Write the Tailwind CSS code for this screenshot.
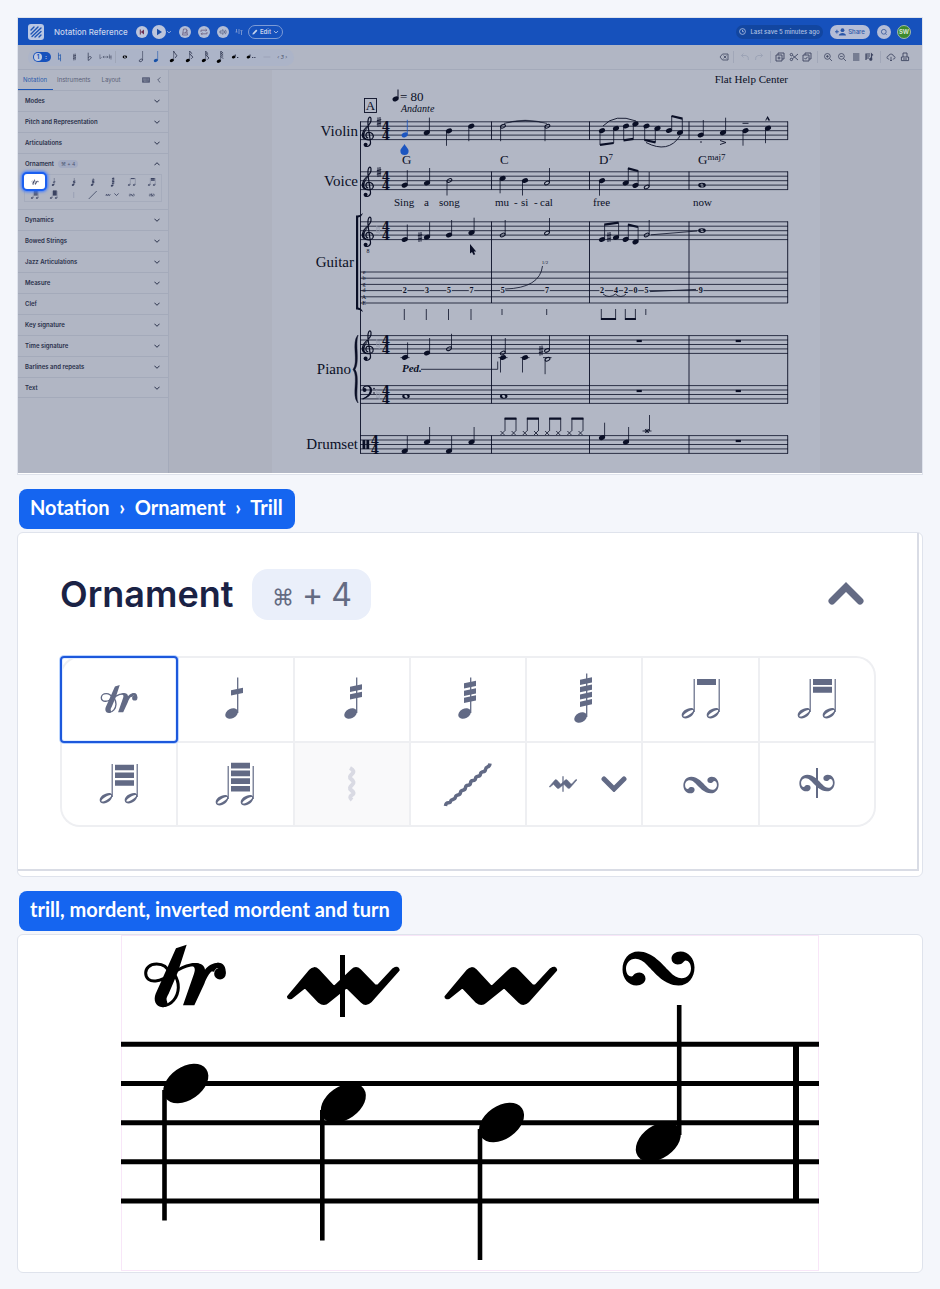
<!DOCTYPE html>
<html lang="en">
<head>
    <meta charset="UTF-8">
    <meta name="viewport" content="width=device-width, initial-scale=1.0">
    <title>Notation Reference - Trill</title>
    <script src="https://cdn.jsdelivr.net/npm/@tailwindcss/browser@4"></script>
</head>
<body class="bg-[#f4f6fb] px-[17px] pt-[17px] pb-4 font-['Inter',sans-serif]">

    <!-- Shared music symbols -->
    <svg class="absolute w-0 h-0" aria-hidden="true">
        <defs>
            <ellipse id="head" rx="3.2" ry="2.3" transform="rotate(-25)"/>
            <ellipse id="half" rx="2.6" ry="1.6" transform="rotate(-28)" fill="none" stroke="currentColor" stroke-width="1"/>
            <g id="up"><use href="#head"/><path d="M2.6 -.5V-15" stroke="currentColor" stroke-width=".8"/></g>
            <g id="down"><use href="#head"/><path d="M-2.5 .5V15" stroke="currentColor" stroke-width=".8"/></g>
            <g id="halfUp"><use href="#half"/><path d="M2.5 -.5V-15" stroke="currentColor" stroke-width=".8"/></g>
            <g id="halfDown"><use href="#half"/><path d="M-2.4 .5V15" stroke="currentColor" stroke-width=".8"/></g>
            <g id="whole"><path fill-rule="evenodd" d="M-3.8 0A3.8 2.4 0 1 0 3.8 0A3.8 2.4 0 1 0 -3.8 0ZM-1.7 -.6C-1 -2 1 -1.6 1.6 .4C1.8 1.8 -.4 2 -1.2 .8Z"/></g>
            <path id="staff" d="M360 0H788M360 4.4H788M360 8.9H788M360 13.3H788M360 17.8H788" stroke="currentColor" stroke-width=".8" fill="none"/>
            <g id="treble">
                <path d="M.3 3C-3 2.5 -2.8 -2.6 .5 -2.8C4 -3 6 0 5 2.5C4 5 -1 5.5 -4 3.5C-7 1 -5.5 -4.5 -2 -7.5C1 -10 3.5 -13 3 -16.5C2.6 -18.5 1 -18.5 .3 -16C-.7 -13 0 -9 1 -3L2.5 7C3 11.5 -2 12.5 -3.5 10" fill="none" stroke="currentColor" stroke-width="1.2"/>
                <path d="M-5.4 0C-5 -4 0 -7.5 2 -11L3.4 -15C3.4 -10 -3 -6 -3.6 0C-3.8 3 -1 4.4 1 4.6C-3 5 -5.6 3 -5.4 0Z"/>
                <circle cx="-2.4" cy="9.6" r="2"/>
            </g>
            <g id="bass">
                <path d="M-5.5 12.5C-1 10.5 2.8 7.5 2.8 3.4C2.8 .4 1 -.6 -1 -.6C-3.4 -.6 -5 1 -5 3" fill="none" stroke="currentColor" stroke-width="1.1"/>
                <path d="M-1 -1C2 -1 4 .6 4 3.6C4 8 .4 11 -5.5 12.8C-1 10 1.8 7.5 1.8 3.4C1.8 1 .6 -.4 -1 -1Z"/>
                <circle cx="-3.4" cy="3.4" r="1.9"/><circle cx="6" cy="2" r=".8"/><circle cx="6" cy="6.4" r=".8"/>
            </g>
            <path id="sharp" d="M-1 -4.6V5M1 -5V4.6M-2.2 -1.2L2.2 -2.4M-2.2 2.2L2.2 1" stroke="currentColor" stroke-width=".9" fill="none"/>
            <path id="natural" d="M-1.2 -5V3M1.2 -3V5M-1.2 -1.8L1.2 -2.4M-1.2 2.6L1.2 2" stroke="currentColor" stroke-width=".8" fill="none"/>
            <rect id="rest" x="-2.6" y="-1.1" width="5.2" height="2.2"/>
            <path id="cross" d="M-2 -2L2 2M-2 2L2 -2" stroke="currentColor" stroke-width=".8"/>
            <g id="time" font-family="DejaVu Serif, serif" font-weight="700" font-size="12" text-anchor="middle">
                <text y="9">4</text><text y="18">4</text>
            </g>
            <path id="turn" d="M-20 -17C-6 -17 4 -4 11 3C15 7.5 19 9.8 23 9.8C29 9.8 32.5 5 32.5 0C32.5 -5 30 -8 27 -8C25 -8 25 -4 19 -4A6 6 0 0 1 13 -10C13 -14 17 -17 22 -17C30 -17 36 -10 36 -1C36 9 30 17 20 17C6 17 -4 4 -11 -3C-15 -7.5 -19 -9.8 -23 -9.8C-29 -9.8 -32.5 -5 -32.5 0C-32.5 5 -30 8 -27 8C-25 8 -25 4 -19 4A6 6 0 0 1 -13 10C-13 14 -17 17 -22 17C-30 17 -36 10 -36 1C-36 -9 -30 -17 -20 -17Z"/>
            <path id="mordent" d="M-55 10.7L-33 -15.5Q-29 -20 -24.7 -16L-9 1L9 -16Q13 -20 17 -16L32 -.5L35 -.5L50.3 -17Q55 -20 55.7 -16L27.7 15.5Q23 20 18.7 16L3.7 1.3L-14.7 16Q-19 20 -24 16L-38 1.3L-51.5 12Q-55 13 -55 10.7Z" stroke="currentColor" stroke-width="2" stroke-linejoin="round"/>
            <g id="trill"><g transform="translate(-225 -137)">
                <path d="M230 43L198 54L137 190C130 208 135 228 158 231C178 230 172 217 170 210C168 203 172 198 176 190L204 124Z"/>
                <path d="M158 226C185 226 204 200 205 172C206 150 198 140 190 126M178 128C172 108 155 101 140 101C118 101 107 115 107 128C107 145 120 154 137 152C165 150 185 130 205 118C225 106 245 101 266 104" fill="none" stroke="currentColor" stroke-width="9"/>
                <path d="M219 225H253L283 160C290 140 300 122 320 112L326 97C308 97 294 106 285 118C284 104 270 96 248 98L232 105C254 104 258 114 252 130Z"/>
                <path d="M300 122C308 102 316 97 326 97C340 97 349 110 347 130L330 118C324 110 318 112 312 124Z"/>
                <circle cx="330" cy="130" r="17.5"/>
            </g></g>
            <ellipse id="bigHead" rx="25" ry="16.5" transform="rotate(-35)"/>
            <ellipse id="cellHead" rx="6.7" ry="4.7" transform="rotate(-28)"/>
            <path id="cellHalf" fill-rule="evenodd" d="M-6.3 2.4C-6.6 -1.5 -1 -5.5 4 -5C7.5 -4 6.6 .5 3.6 3C-.5 6.5 -6 6 -6.3 2.4ZM-4.6 3.2C-3.6 4.8 5.6 -.2 5.2 -2.6C4.2 -4.6 -5.2 1 -4.6 3.2Z"/>
            <g id="pair"><use href="#cellHalf" x="-13" y="14"/><use href="#cellHalf" x="12" y="14"/><path d="M-6.8 13V-20M18.2 13V-20" stroke="currentColor" stroke-width="1.2"/></g>
            <path id="slash" d="M-6 -1.2L6 -3.8V1.4L-6 4Z"/>
            <path id="chev" d="M-2.6 -1.3L0 1.3L2.6 -1.3" fill="none" stroke="currentColor" stroke-width="1"/>
        </defs>
    </svg>

    <!-- Editor -->
    <section class="bg-white border border-[#dfe3ec] pb-px">
        <div class="bg-[#b1b6c4] text-[#29304a] overflow-hidden">
            <header class="h-[27px] bg-[#1651bc] flex items-center pl-[10px] pr-[11px] text-[#c8d4ec]">
                <svg class="size-4 shrink-0" viewBox="0 0 16 16"><rect width="16" height="16" rx="3" fill="#b9c7e4"/><path d="M3 6L6 3M3 10L10 3M4 12.5L13 4M7 13L13 7.5M11 13L13 11" stroke="#1e55b5" stroke-width="1.4" stroke-linecap="round"/></svg>
                <h1 class="ml-[10px] w-[82px] text-[8px] leading-none font-medium whitespace-nowrap">Notation Reference</h1>
                <button class="size-3 rounded-full bg-[#bcc5dc] flex items-center justify-center" aria-label="Rewind"><svg class="size-2" viewBox="0 0 8 8"><path d="M6 1.5V6.5L2.8 4ZM1.8 1.5H2.8V6.5H1.8Z" fill="#6b2f55"/></svg></button>
                <button class="ml-1 size-[14px] rounded-full bg-[#bcc5dc] flex items-center justify-center" aria-label="Play"><svg class="size-2" viewBox="0 0 8 8"><path d="M2 .8V7.2L7 4Z" fill="#1b4ea8"/></svg></button>
                <svg class="w-[6px] h-[6px]" viewBox="-3 -3 6 6"><use href="#chev" transform="scale(.7)"/></svg>
                <button class="ml-[7px] size-3 rounded-full bg-[#b3bdd6] flex items-center justify-center" aria-label="Metronome"><svg class="size-2" viewBox="0 0 8 8" fill="none" stroke="#6c5f80" stroke-width=".8"><path d="M2.5 1H5.5L6.5 7H1.5ZM2 5H6M4 5L6.5 2"/></svg></button>
                <button class="ml-[7px] size-3 rounded-full bg-[#b3bdd6] flex items-center justify-center" aria-label="Loop"><svg class="size-2" viewBox="0 0 8 8" fill="none" stroke="#6c5f80" stroke-width=".8"><path d="M1 4V2.2H6.8M5.6 1L6.8 2.2L5.6 3.4M7 4V5.8H1.2M2.4 4.6L1.2 5.8L2.4 7"/></svg></button>
                <button class="ml-[7px] size-3 rounded-full bg-[#b3bdd6] flex items-center justify-center" aria-label="Sound"><svg class="size-2" viewBox="0 0 8 8" fill="none" stroke="#5c6485" stroke-width=".8"><path d="M1 3H2.4L4 1.6V6.4L2.4 5H1ZM5.2 2.6Q6.2 4 5.2 5.4M6.4 1.8Q8 4 6.4 6.2"/></svg></button>
                <svg class="ml-[6px] size-2 shrink-0" viewBox="0 0 8 8"><path d="M1.5 1V4M4 1V6M6.5 3V7M.5 4H2.5M5.5 2.6H7.5" stroke="#7f9bd2" stroke-width=".9"/></svg>
                <button class="ml-[5px] w-[35px] h-[14px] rounded-full border border-[#7d9bd6] flex items-center justify-center gap-[2px] text-[6px] leading-none font-semibold"><svg class="size-[6px]" viewBox="0 0 6 6"><path d="M.4 5.6L.8 4L4.2 .6L5.4 1.8L2 5.2Z" fill="currentColor"/></svg>Edit<svg class="size-[6px]" viewBox="-3 -3 6 6"><use href="#chev" transform="scale(.8)"/></svg></button>
                <div class="ml-auto w-[87px] h-[14px] rounded-full bg-[#1246a0] flex items-center justify-center gap-1 text-[6px] leading-none font-medium whitespace-nowrap text-[#b0c1e2]"><svg class="size-[7px] shrink-0" viewBox="0 0 6 6" fill="none" stroke="currentColor" stroke-width=".7"><circle cx="3" cy="3" r="2.5"/><path d="M3 1.6V3.2H4.2"/></svg>Last save 5 minutes ago</div>
                <button class="ml-[7px] w-10 h-[14px] rounded-full bg-[#b4bdd6] text-[#2a56a8] flex items-center justify-center gap-[2px] text-[6px] leading-none font-medium"><svg class="w-[11px] h-2" viewBox="0 0 11 8" fill="currentColor"><circle cx="7.5" cy="2.2" r="1.9"/><path d="M3.8 7.5C4 4 11 4 11 7.5ZM0 3.2H1.4V1.8H2.4V3.2H3.8V4.2H2.4V5.6H1.4V4.2H0Z"/></svg>Share</button>
                <button class="ml-[7px] size-[14px] rounded-full bg-[#b4bdd6] flex items-center justify-center" aria-label="Search"><svg class="size-[8px]" viewBox="0 0 8 8" fill="none" stroke="#3f5f9c" stroke-width=".9"><circle cx="3.8" cy="3.8" r="2.4"/><path d="M5.4 5.6L6.6 6.8"/></svg></button>
                <div class="ml-[6px] size-[14px] rounded-full bg-[#3d8a2c] border border-[#9fb8b0] flex items-center justify-center text-[6px] leading-none font-bold text-[#d5e4d2]">SW</div>
            </header>

            <div class="h-[25px] border-b border-[#a4aaba] flex items-center justify-between pl-[10px] pr-3">
                <div class="w-[266px] h-[17px] rounded-full bg-[#acb4c8] flex items-center pl-[5px] pr-1">
                    <button class="w-[18px] h-[10px] shrink-0 rounded-full bg-[#1651bc] flex items-center px-px mr-px text-[6px] leading-none font-bold text-[#c8d4ec] gap-[3px]"><span class="size-2 rounded-full bg-[#c0cadf] text-[#1651bc] flex items-center justify-center">1</span>:</button>
                    <button class="w-[15px]" aria-label="Natural"><svg class="w-full h-3 text-[#1651a8]" viewBox="-7 -7 14 14"><use href="#natural"/></svg></button>
                    <button class="w-[15px]" aria-label="Sharp"><svg class="w-full h-3" viewBox="-7 -7 14 14"><use href="#sharp" transform="scale(.8)"/></svg></button>
                    <button class="w-[15px]" aria-label="Flat"><svg class="w-full h-3" viewBox="-7 -7 14 14"><path d="M-1.5 -5V4C1.5 2.6 3 .2 1.4 -.4C0 -.8 -1 0 -1.5 1" fill="none" stroke="#29304a" stroke-width=".8"/></svg></button>
                    <button class="w-[17px]" aria-label="Enharmonic"><svg class="w-full h-3" viewBox="-8 -7 16 14" fill="none" stroke="#4a5168" stroke-width=".7"><path d="M-6.5 -3V2L-4.5 .5M-3 0H3M-1.6 -1.2L-3 0L-1.6 1.2M1.6 -1.2L3 0L1.6 1.2M4.6 -3V2M6.4 -2V3M4 0H7"/></svg></button>
                    <span class="mx-px w-px h-3 bg-[#9fa6b8]"></span>
                    <div class="flex flex-1 text-[#29304a]">
                        <button class="flex-1" aria-label="Whole"><svg class="w-full h-3" viewBox="-7 -7 14 14"><use href="#whole" transform="scale(.7)"/></svg></button>
                        <button class="flex-1" aria-label="Half"><svg class="w-full h-3" viewBox="-7 -7 14 14"><use href="#halfUp" y="5" transform="scale(.8)"/></svg></button>
                        <button class="flex-1" aria-label="Quarter"><svg class="w-full h-3 text-[#1651a8]" fill="currentColor" viewBox="-7 -7 14 14"><use href="#up" y="5" transform="scale(.8)"/></svg></button>
                        <button class="flex-1" aria-label="Eighth"><svg class="w-full h-3" viewBox="-7 -7 14 14"><use href="#up" y="5" transform="scale(.8)"/><path d="M2 -7Q3 -4 5 -3T4 1" fill="none" stroke="#29304a"/></svg></button>
                        <button class="flex-1" aria-label="16th"><svg class="w-full h-3" viewBox="-7 -7 14 14"><use href="#up" y="5" transform="scale(.8)"/><path d="M2 -7Q3 -5 5 -4M2 -4Q3 -2 5 -1T4 2" fill="none" stroke="#29304a"/></svg></button>
                        <button class="flex-1" aria-label="32nd"><svg class="w-full h-3" viewBox="-7 -7 14 14"><use href="#up" y="5" transform="scale(.8)"/><path d="M2 -7Q3 -5 5 -4M2 -5Q3 -3 5 -2M2 -3Q3 -1 5 0T4 3" fill="none" stroke="#29304a"/></svg></button>
                        <button class="flex-1" aria-label="64th"><svg class="w-full h-3" viewBox="-7 -7 14 14"><use href="#up" y="6" transform="scale(.8)"/><path d="M2 -7L5 -4.5M2 -5L5 -2.5M2 -3L5 -.5M2 -1L5 2" fill="none" stroke="#29304a"/></svg></button>
                        <button class="flex-1" aria-label="Dotted"><svg class="w-full h-3" viewBox="-7 -7 14 14"><use href="#head" transform="scale(.7)" x="-2"/><path d="M.5 -1V-3M2.5 .5H4" stroke="#29304a" stroke-width="1.2"/></svg></button>
                        <button class="flex-1" aria-label="Double dotted"><svg class="w-full h-3" viewBox="-7 -7 14 14"><use href="#head" transform="scale(.7)" x="-4"/><path d="M-1 -1V-3M1.5 .5H2.8M4 .5H5.3" stroke="#29304a" stroke-width="1.2"/></svg></button>
                        <button class="flex-1" aria-label="Tie"><svg class="w-full h-3" viewBox="-7 -7 14 14"><path d="M-4 0H4" stroke="#959cb0" stroke-width=".8"/></svg></button>
                        <button class="flex-1 text-[5px] leading-none italic text-[#4a5168] whitespace-nowrap">‹ 3 ›</button>
                    </div>
                </div>
                <div class="flex items-center text-[#3c4460]">
                    <button aria-label="Delete"><svg class="size-[10px] mr-1" viewBox="0 0 10 10" fill="none" stroke="currentColor" stroke-width=".8"><path d="M3.5 2H9V8H3.5L1 5ZM4.6 3.6L7.4 6.4M7.4 3.6L4.6 6.4"/></svg></button>
                    <span class="w-px h-3 bg-[#a1a7b8] mr-[6px]"></span>
                    <button aria-label="Undo"><svg class="size-[10px] mr-1" viewBox="0 0 10 10" fill="none" stroke="#989fb2" stroke-width=".8"><path d="M3.5 1.5L1.5 3.5L3.5 5.5M1.5 3.5H6Q9 4 8.4 8"/></svg></button>
                    <button aria-label="Redo"><svg class="size-[10px] mr-[6px]" viewBox="0 0 10 10" fill="none" stroke="#989fb2" stroke-width=".8"><path d="M6.5 1.5L8.5 3.5L6.5 5.5M8.5 3.5H4Q1 4 1.6 8"/></svg></button>
                    <span class="w-px h-3 bg-[#a1a7b8] mr-[4px]"></span>
                    <button aria-label="Copy"><svg class="size-[10px] mr-1" viewBox="0 0 10 10" fill="none" stroke="currentColor" stroke-width=".9"><path d="M1 3H7V9H1ZM3 3V1H9V7H7M4 4.5V7.5M2.5 6H5.5"/></svg></button>
                    <button aria-label="Cut"><svg class="size-[10px] mr-[3px]" viewBox="0 0 10 10" fill="none" stroke="currentColor" stroke-width=".9"><circle cx="2.4" cy="2.6" r="1.2"/><circle cx="2.4" cy="7.4" r="1.2"/><path d="M3.4 3.2L9 8M3.4 6.8L9 2"/></svg></button>
                    <button aria-label="Paste"><svg class="size-[10px] mr-[5px]" viewBox="0 0 10 10" fill="none" stroke="currentColor" stroke-width=".9"><path d="M1 3H7V9H1ZM3 3V1H9V7H7M2.5 6L3.6 7.2L5.6 4.8"/></svg></button>
                    <span class="w-px h-3 bg-[#a1a7b8] mr-[5px]"></span>
                    <button aria-label="Zoom in"><svg class="size-[10px] mr-1" viewBox="0 0 10 10" fill="none" stroke="currentColor" stroke-width=".8"><circle cx="4.4" cy="4.4" r="2.9"/><path d="M6.5 6.5L9 9M3 4.4H5.8M4.4 3V5.8"/></svg></button>
                    <button aria-label="Zoom out"><svg class="size-[10px] mr-1" viewBox="0 0 10 10" fill="none" stroke="currentColor" stroke-width=".8"><circle cx="4.4" cy="4.4" r="2.9"/><path d="M6.5 6.5L9 9M3 4.4H5.8"/></svg></button>
                    <button aria-label="Layout"><svg class="size-[10px] mr-[3px]" viewBox="0 0 10 10" stroke="currentColor" stroke-width="1.2"><path d="M2 2H8.4M2 4H8.4M2 6H8.4M2 8H8.4"/></svg></button>
                    <button aria-label="Parts"><svg class="size-[10px] mr-[6px]" viewBox="0 0 10 10" fill="none" stroke="currentColor" stroke-width="1.2"><path d="M2 8V2H6M2 4H6M2 6H5M7.5 7V2L9 3.4"/><circle cx="6.8" cy="7.2" r="1" fill="currentColor"/></svg></button>
                    <span class="w-px h-3 bg-[#a1a7b8] mr-[5px]"></span>
                    <button aria-label="Export"><svg class="size-[10px] mr-1" viewBox="0 0 10 10" fill="none" stroke="currentColor" stroke-width=".8"><path d="M3 7H2.4Q.8 6.8 1 5.2Q1.2 4 2.6 4Q3 2 5 2Q7.2 2 7.4 4Q9 4.2 9 5.5Q9 7 7.4 7H7M5 4.8V9M3.8 7.8L5 9L6.2 7.8"/></svg></button>
                    <button aria-label="Print"><svg class="size-[10px]" viewBox="0 0 10 10" fill="none" stroke="currentColor" stroke-width=".9"><path d="M3 5V1H7V5M1.4 5H8.6V8.6H1.4ZM3 7H7"/></svg></button>
                </div>
            </div>

            <div class="flex h-[403px]">
                <aside class="w-[151px] shrink-0 border-r border-[#a4aaba] text-[6px] leading-none">
                    <nav class="h-5 flex items-center pl-[5px] pr-[5px] text-[#5a6178]">
                        <button class="h-5 -ml-[5px] pl-[5px] pr-[6px] border-b border-[#1c55b4] text-[#2a59ac]">Notation</button>
                        <button class="h-5 ml-1">Instruments</button>
                        <button class="h-5 ml-[11px]">Layout</button>
                        <button class="ml-auto" aria-label="Keyboard"><svg class="w-2 h-[6px]" viewBox="0 0 9 6"><rect width="9" height="6" rx=".8" fill="#59607a"/><path d="M1 1.8H8M1 3H8M2.4 4.4H6.6" stroke="#b1b6c4" stroke-width=".6" stroke-dasharray=".8 .6"/></svg></button>
                        <button class="ml-[6px] mr-px" aria-label="Collapse"><svg class="size-[6px]" viewBox="-3 -3 6 6"><use href="#chev" transform="rotate(90)"/></svg></button>
                    </nav>
                    <div class="font-semibold">
                        <button class="w-full h-[21px] border-t border-[#a4aaba] flex items-center justify-between pl-[7px] pr-2">Modes<svg class="size-[6px]" viewBox="-3 -3 6 6"><use href="#chev"/></svg></button>
                        <button class="w-full h-[21px] border-t border-[#a4aaba] flex items-center justify-between pl-[7px] pr-2">Pitch and Representation<svg class="size-[6px]" viewBox="-3 -3 6 6"><use href="#chev"/></svg></button>
                        <button class="w-full h-[21px] border-t border-[#a4aaba] flex items-center justify-between pl-[7px] pr-2">Articulations<svg class="size-[6px]" viewBox="-3 -3 6 6"><use href="#chev"/></svg></button>
                        <div class="h-14 border-t border-[#a4aaba] pl-[6px] pr-[6px]">
                            <button class="w-full h-5 flex items-center pl-px pr-[2px]">Ornament<span class="ml-1 px-[3px] py-px rounded-sm bg-[#a3abc2] text-[#4b5472] text-[5px] leading-[6px] font-normal">⌘ + 4</span><svg class="ml-auto size-[6px]" viewBox="-3 -3 6 6"><use href="#chev" transform="scale(1 -1)"/></svg></button>
                            <div class="grid grid-cols-7 border border-[#a6acbc] text-[#3a4260] fill-current">
                                <button class="relative h-[13px]" aria-label="Trill">
                                    <span class="absolute -inset-x-[3px] -inset-y-[3px] rounded-[5px] border-2 border-[#1a5ff0] bg-white shadow-[0_0_3px_1px_#3f7bff] flex items-center justify-center"><svg class="w-2 h-[6px]" viewBox="-140 -100 280 200"><use href="#trill"/></svg></span>
                                </button>
                                <button class="h-[13px]" aria-label="Tremolo 1"><svg class="w-full h-3" viewBox="-40 -30 80 60"><path d="M2.7 14V-20" stroke="currentColor" stroke-width="2"/><use href="#cellHead" x="-3.4" y="14.5"/><use href="#slash" x="2"/></svg></button>
                                <button class="h-[13px]" aria-label="Tremolo 2"><svg class="w-full h-3" viewBox="-40 -30 80 60"><path d="M2.7 14V-20" stroke="currentColor" stroke-width="2"/><use href="#cellHead" x="-3.4" y="14.5"/><use href="#slash" x="2" y="-4"/><use href="#slash" x="2" y="4"/></svg></button>
                                <button class="h-[13px]" aria-label="Tremolo 3"><svg class="w-full h-3" viewBox="-40 -30 80 60"><path d="M2.7 14V-20" stroke="currentColor" stroke-width="2"/><use href="#cellHead" x="-3.4" y="14.5"/><use href="#slash" x="2" y="-10"/><use href="#slash" x="2" y="-3"/><use href="#slash" x="2" y="4"/></svg></button>
                                <button class="h-[13px]" aria-label="Tremolo 4"><svg class="w-full h-3" viewBox="-40 -30 80 60"><path d="M2.7 18V-25" stroke="currentColor" stroke-width="2"/><use href="#cellHead" x="-3.4" y="18"/><use href="#slash" x="2" y="-18"/><use href="#slash" x="2" y="-10"/><use href="#slash" x="2" y="-2"/><use href="#slash" x="2" y="6"/></svg></button>
                                <button class="h-[13px]" aria-label="Two-note tremolo 1"><svg class="w-full h-3" viewBox="-40 -30 80 60"><use href="#pair"/><path d="M-4 -17H15" stroke="currentColor" stroke-width="5"/></svg></button>
                                <button class="h-[13px]" aria-label="Two-note tremolo 2"><svg class="w-full h-3" viewBox="-40 -30 80 60"><use href="#pair"/><path d="M-4 -17H15M-4 -9H15" stroke="currentColor" stroke-width="6"/></svg></button>
                                <button class="h-[13px]" aria-label="Two-note tremolo 3"><svg class="w-full h-3" viewBox="-40 -30 80 60"><use href="#pair"/><path d="M-4 -17H15M-4 -9H15M-4 -1H15" stroke="currentColor" stroke-width="6"/></svg></button>
                                <button class="h-[13px]" aria-label="Two-note tremolo 4"><svg class="w-full h-3" viewBox="-40 -30 80 60"><use href="#pair"/><path d="M-4 -10H15" stroke="currentColor" stroke-width="26"/></svg></button>
                                <button class="h-[13px]" aria-label="Arpeggio"><svg class="w-full h-3" viewBox="-40 -30 80 60"><path d="M0 -15V15" stroke="#949bb0" stroke-width="4"/></svg></button>
                                <button class="h-[13px]" aria-label="Glissando"><svg class="w-full h-3" viewBox="-40 -30 80 60"><path d="M-20 20L20 -20" stroke="currentColor" stroke-width="4"/></svg></button>
                                <button class="h-[13px] flex items-center justify-center gap-[3px]" aria-label="Mordent"><svg class="w-[6px] h-3" viewBox="-60 -60 120 120"><use href="#mordent"/></svg><svg class="size-[5px]" viewBox="-3 -3 6 6"><use href="#chev"/></svg></button>
                                <button class="h-[13px]" aria-label="Turn"><svg class="w-full h-3" viewBox="-100 -75 200 150"><use href="#turn"/></svg></button>
                                <button class="h-[13px]" aria-label="Inverted turn"><svg class="w-full h-3" viewBox="-100 -75 200 150"><use href="#turn"/><path d="M0 -25V25" stroke="currentColor" stroke-width="6"/></svg></button>
                            </div>
                        </div>
                        <button class="w-full h-[21px] border-t border-[#a4aaba] flex items-center justify-between pl-[7px] pr-2">Dynamics<svg class="size-[6px]" viewBox="-3 -3 6 6"><use href="#chev"/></svg></button>
                        <button class="w-full h-[21px] border-t border-[#a4aaba] flex items-center justify-between pl-[7px] pr-2">Bowed Strings<svg class="size-[6px]" viewBox="-3 -3 6 6"><use href="#chev"/></svg></button>
                        <button class="w-full h-[21px] border-t border-[#a4aaba] flex items-center justify-between pl-[7px] pr-2">Jazz Articulations<svg class="size-[6px]" viewBox="-3 -3 6 6"><use href="#chev"/></svg></button>
                        <button class="w-full h-[21px] border-t border-[#a4aaba] flex items-center justify-between pl-[7px] pr-2">Measure<svg class="size-[6px]" viewBox="-3 -3 6 6"><use href="#chev"/></svg></button>
                        <button class="w-full h-[21px] border-t border-[#a4aaba] flex items-center justify-between pl-[7px] pr-2">Clef<svg class="size-[6px]" viewBox="-3 -3 6 6"><use href="#chev"/></svg></button>
                        <button class="w-full h-[21px] border-t border-[#a4aaba] flex items-center justify-between pl-[7px] pr-2">Key signature<svg class="size-[6px]" viewBox="-3 -3 6 6"><use href="#chev"/></svg></button>
                        <button class="w-full h-[21px] border-t border-[#a4aaba] flex items-center justify-between pl-[7px] pr-2">Time signature<svg class="size-[6px]" viewBox="-3 -3 6 6"><use href="#chev"/></svg></button>
                        <button class="w-full h-[21px] border-t border-[#a4aaba] flex items-center justify-between pl-[7px] pr-2">Barlines and repeats<svg class="size-[6px]" viewBox="-3 -3 6 6"><use href="#chev"/></svg></button>
                        <button class="w-full h-[21px] border-y border-[#a4aaba] flex items-center justify-between pl-[7px] pr-2">Text<svg class="size-[6px]" viewBox="-3 -3 6 6"><use href="#chev"/></svg></button>
                    </div>
                </aside>

                <!-- Score page -->
                <main class="flex-1 bg-[#aeb2bf] flex justify-center">
                    <svg class="w-[548px] h-[403px] bg-[#b2b7c5] text-[#0a0f26]" viewBox="272 70 548 403" fill="currentColor" font-family="Liberation Serif, serif">
                        <g font-size="15" text-anchor="end">
                            <text x="358" y="136">Violin</text>
                            <text x="358" y="186">Voice</text>
                            <text x="354" y="267">Guitar</text>
                            <text x="351" y="374">Piano</text>
                            <text x="358" y="449">Drumset</text>
                        </g>
                        <text x="788" y="83" font-size="11" text-anchor="end">Flat Help Center</text>
                        <rect x="364.5" y="98.5" width="12" height="14" fill="none" stroke="currentColor" stroke-width=".9"/>
                        <text x="370.5" y="110" font-size="13" text-anchor="middle">A</text>
                        <use href="#head" x="395.6" y="98.8"/><path d="M398 98V89.5" stroke="currentColor"/>
                        <text x="400" y="101" font-size="13">= 80</text>
                        <text x="401" y="112" font-size="10" font-style="italic">Andante</text>

                        <!-- Staves and barlines -->
                        <use href="#staff" y="121.8"/><use href="#staff" y="171.8"/><use href="#staff" y="221.8"/>
                        <use href="#staff" y="335.6"/><use href="#staff" y="385.6"/><use href="#staff" y="435.6"/>
                        <path d="M360 272H788M360 278.2H788M360 284.4H788M360 290.6H788M360 296.8H788M360 303H788" stroke="currentColor" stroke-width=".8"/>
                        <path d="M360.5 121.5V453.5M491.5 121.5V139.8M589.5 121.5V139.8M689 121.5V139.8M787.7 121.5V139.8M491.5 171.5V189.8M589.5 171.5V189.8M689 171.5V189.8M787.7 171.5V189.8M491.5 221.5V303M589.5 221.5V303M689 221.5V303M787.7 221.5V303M491.5 335.5V403.5M589.5 335.5V403.5M689 335.5V403.5M787.7 335.5V403.5M491.5 435.5V453.5M589.5 435.5V453.5M689 435.5V453.5M787.7 435.5V453.5" stroke="currentColor" stroke-width=".9"/>
                        <path d="M356 215.5Q360 216 363 213Q361.5 217 358.2 217.5V307.5Q361.5 308 363 312Q360 309 356 309.5Z"/>
                        <path d="M358 335C351 342 359 362 353 369.5C359 377 351 396 358 403C355 394 360 376 355 369.5C360 362 355 345 358 335Z" stroke="currentColor" stroke-width=".5"/>
                        <use href="#treble" x="368" y="135.1"/><use href="#treble" x="368" y="185.1"/><use href="#treble" x="368" y="235.1"/><use href="#treble" x="368" y="348.9"/>
                        <text x="368" y="253" font-size="6" text-anchor="middle">8</text>
                        <use href="#bass" x="368" y="386.6"/>
                        <use href="#sharp" x="379" y="122"/><use href="#sharp" x="379" y="172"/>
                        <g class="text-[#979dae]"><use href="#natural" x="378" y="230"/><use href="#natural" x="378" y="344"/><use href="#natural" x="378" y="395"/></g>
                        <use href="#time" x="386" y="121.8"/><use href="#time" x="386" y="171.8"/><use href="#time" x="386" y="221.8"/><use href="#time" x="386" y="335.6"/><use href="#time" x="386" y="385.6"/><use href="#time" x="375" y="435.6"/>
                        <path d="M362.5 440H365.3V449H362.5ZM366.4 440H369.2V449H366.4Z"/>

                        <!-- Violin -->
                        <g class="text-[#1c55c0]" fill="#1c55c0"><use href="#up" x="404.7" y="134.8"/><path d="M404.5 144C406 147 408.6 148.4 408.6 151A4 4 0 0 1 400.4 151C400.4 148.4 403 147 404.5 144Z"/></g>
                        <use href="#up" x="426.8" y="132.6"/><use href="#down" x="449" y="130.8"/><use href="#down" x="471.3" y="126.2"/>
                        <use href="#halfDown" x="503" y="126.2"/><use href="#halfDown" x="547.4" y="126.2"/>
                        <path d="M504 123.4Q525 117 547 123.4Q525 118.6 504 123.4Z" stroke="currentColor" stroke-width=".4"/>
                        <use href="#head" x="602" y="130.7"/><use href="#head" x="616" y="128.4"/><use href="#head" x="626" y="126"/><use href="#head" x="635.5" y="123.8"/>
                        <use href="#head" x="646.5" y="126"/><use href="#head" x="657.5" y="128.4"/><use href="#head" x="669" y="130.5"/><use href="#head" x="680" y="132.7"/>
                        <path d="M600 131V145M613.7 129V143M623.7 126V140M633.3 124V138.5M644.7 126V140.5M655.3 128V142.5M671.7 130V116M682.3 132V118.5" stroke="currentColor" stroke-width=".8"/>
                        <path d="M600 144.8L613.7 143M623.5 140.4L633.5 138.8M644.5 140L655.5 142.3M671.5 116L682.5 118.6" stroke="currentColor" stroke-width="2.2"/>
                        <path d="M603 126Q615 113 636 121M646 142.5Q668 154 680 136" fill="none" stroke="currentColor" stroke-width=".9"/>
                        <use href="#up" x="700.7" y="135"/><use href="#up" x="723" y="132.7"/><use href="#down" x="745.5" y="130.7"/><use href="#down" x="768" y="128.2"/>
                        <circle cx="701" cy="142" r=".8"/>
                        <path d="M720 140.5L726 142.5L720 144.5M742.5 123.3H748.5" fill="none" stroke="currentColor" stroke-width=".9"/>
                        <path d="M765.2 120.5L767.6 116L770.2 120.5H768.2L767.2 118.2L766.2 120.5Z"/>

                        <!-- Chords, voice and lyrics -->
                        <g font-size="13">
                            <text x="402" y="164">G</text><text x="500" y="164">C</text>
                            <text x="599" y="164">D<tspan font-size="9" dy="-4">7</tspan></text>
                            <text x="698" y="164">G<tspan font-size="9" dy="-4">maj7</tspan></text>
                        </g>
                        <use href="#up" x="404.7" y="185.2"/><use href="#up" x="427" y="183"/><use href="#halfDown" x="449.4" y="180.5"/>
                        <use href="#down" x="502.6" y="178.3"/><use href="#down" x="525" y="180.5"/><use href="#halfUp" x="547" y="183"/>
                        <use href="#down" x="602" y="180.7"/><use href="#up" x="625.7" y="183"/><use href="#up" x="635.5" y="185.3"/>
                        <path d="M628 168.4L638 171" stroke="currentColor" stroke-width="2.2"/>
                        <use href="#halfUp" x="646.7" y="187"/><use href="#whole" x="702" y="185.2"/>
                        <g font-size="11">
                            <text x="394" y="206">Sing</text><text x="424" y="206">a</text><text x="439" y="206">song</text>
                            <text x="495" y="206">mu</text><text x="514" y="206">-</text><text x="521" y="206">si</text><text x="534" y="206">-</text><text x="540" y="206">cal</text>
                            <text x="593" y="206">free</text><text x="693" y="206">now</text>
                        </g>

                        <!-- Guitar and tablature -->
                        <use href="#up" x="404.7" y="239.5"/><use href="#sharp" x="420" y="237"/><use href="#up" x="427" y="237.2"/><use href="#up" x="449" y="235"/><use href="#up" x="471.5" y="232.7"/>
                        <use href="#halfUp" x="502.7" y="235"/><use href="#halfUp" x="547" y="233"/>
                        <use href="#up" x="602" y="239.5"/><use href="#sharp" x="609" y="237"/><use href="#up" x="616" y="237.5"/><use href="#up" x="625.7" y="239.3"/><use href="#up" x="635.5" y="241.8"/>
                        <path d="M604.3 224.6L618.6 222.6M628 224.6L638 227" stroke="currentColor" stroke-width="2.2"/>
                        <use href="#halfUp" x="646.7" y="235"/><use href="#whole" x="702" y="230.6"/>
                        <path d="M651 234.8L697 231M650 291.6L696 289.4" stroke="currentColor" stroke-width=".8"/>
                        <path d="M470 244V253.5L472 252L473.6 255L475.2 254.2L473.8 251.4H476.2Z"/>
                        <g font-size="6" text-anchor="middle">
                            <text x="364" y="274">e</text><text x="364" y="280">b</text><text x="364" y="286">g</text><text x="364" y="292">d</text><text x="364" y="299">A</text><text x="364" y="305">E</text>
                            <text x="545" y="264" font-size="5">1/2</text>
                        </g>
                        <path d="M402 290.6h5.4M424.2 290.6h5.4M446.4 290.6h5.4M468.8 290.6h5.4M500 290.6h5.4M544.4 290.6h5.4M599.4 290.6h5.4M613.4 290.6h5.4M623.2 290.6h5.4M632.8 290.6h5.4M643.8 290.6h5.4M698 290.6h5.4" stroke="#b2b7c5" stroke-width="2"/>
                        <g font-size="8" font-weight="700" text-anchor="middle">
                            <text x="404.7" y="293">2</text><text x="426.9" y="293">3</text><text x="449" y="293">5</text><text x="471.5" y="293">7</text>
                            <text x="502.7" y="293">5</text><text x="547" y="293">7</text>
                            <text x="602" y="293">2</text><text x="616" y="293">4</text><text x="626" y="293">2</text><text x="635.5" y="293">0</text><text x="646.5" y="293">5</text><text x="700.7" y="293">9</text>
                        </g>
                        <path d="M505 289Q540 288 542.5 266M603 294Q609 299 615.5 294Q621 299 626 294" fill="none" stroke="currentColor" stroke-width=".8"/>
                        <path d="M404.3 309V320M426.3 309V320M448.5 309V320M471 309V320M502 309V315M546.7 309V315M601.3 309V320M615.6 309V320M625.3 309V320M635.4 309V320M645.8 309V315" stroke="currentColor" stroke-width=".8"/>
                        <path d="M601 319H616M625 319H635.8" stroke="currentColor" stroke-width="2.2"/>

                        <!-- Piano -->
                        <use href="#up" x="405" y="357.4"/><use href="#up" x="427" y="353"/><use href="#halfUp" x="449" y="348.8"/>
                        <use href="#halfUp" x="502.8" y="353"/><use href="#down" x="503" y="357.5"/><use href="#down" x="525" y="357.5"/>
                        <use href="#sharp" x="541" y="350.6"/><use href="#halfUp" x="547" y="350.4"/><use href="#halfDown" x="547.5" y="359.2"/>
                        <path d="M400.5 357.6H409.5M498.5 357.6H507.5M520.5 357.6H529.5M543 357.6H551.5" stroke="currentColor" stroke-width=".8"/>
                        <text x="402" y="372" font-size="11" font-weight="700" font-style="italic">Ped.</text>
                        <path d="M421 369.3H497.7V361.5" fill="none" stroke="currentColor" stroke-width=".8"/>
                        <use href="#whole" x="406" y="396.3"/><use href="#whole" x="503.7" y="396.3"/>
                        <use href="#rest" x="639.2" y="341"/><use href="#rest" x="738.3" y="341"/><use href="#rest" x="639.2" y="391"/><use href="#rest" x="738.3" y="391"/><use href="#rest" x="738.3" y="441"/>

                        <!-- Drums -->
                        <use href="#up" x="404.7" y="451"/><use href="#up" x="427" y="442"/><use href="#up" x="449" y="451"/><use href="#up" x="471.5" y="442"/>
                        <use href="#cross" x="502.5" y="433"/><use href="#cross" x="513.6" y="433"/><use href="#cross" x="524.8" y="433"/><use href="#cross" x="536" y="433"/>
                        <use href="#cross" x="547.1" y="433"/><use href="#cross" x="558.2" y="433"/><use href="#cross" x="569.4" y="433"/><use href="#cross" x="580.5" y="433"/>
                        <path d="M505 431V418M516 431V418M527.3 431V418M538.5 431V418M549.6 431V418M560.7 431V418M571.9 431V418M583 431V418" stroke="currentColor" stroke-width=".8"/>
                        <path d="M504.6 418.6H516.4M526.9 418.6H538.9M549.2 418.6H561.1M571.5 418.6H583.4" stroke="currentColor" stroke-width="2.2"/>
                        <use href="#up" x="602" y="437.7"/><use href="#up" x="626" y="442"/>
                        <path d="M642.5 431H651.5M649.5 431V415" stroke="currentColor" stroke-width=".8"/><use href="#cross" x="647" y="431"/><path d="M647 428.6L649.4 431L647 433.4L644.6 431Z" fill-opacity=".5"/>
                    </svg>
                </main>
            </div>
        </div>
    </section>

    <h2 class="mt-[14px] ml-[2px] w-fit h-10 pl-[11px] pr-3 rounded-lg bg-[#1565f0] text-white font-['Lato',sans-serif] font-bold text-[20px] leading-[37px] whitespace-pre">Notation  ›  Ornament  ›  Trill</h2>

    <!-- Ornament panel -->
    <section class="mt-[3px] h-[345px] bg-white border border-[#dfe3ec] rounded-md pr-[3px] pb-[5px]">
        <div class="h-full border-r-2 border-b-2 border-[#d9dce5] pt-9 pl-[42px] pr-[41px]">
            <div class="h-[51px] flex items-center">
                <h3 class="pb-[2px] text-[36px] leading-none font-semibold text-[#1a2245]">Ornament</h3>
                <kbd class="ml-[19px] w-[119px] h-[51px] rounded-2xl bg-[#eaeffa] text-[#646b82] flex items-center justify-center gap-2 font-['Inter',sans-serif] text-[32px] leading-none"><span class="text-[22px] leading-none pt-1">⌘</span><span>+</span><span>4</span></kbd>
                <button class="ml-auto mr-3 mb-1 text-[#646b84]" aria-label="Collapse section"><svg class="w-9 h-6" viewBox="0 0 36 24"><path d="M4 20L18 6L32 20" fill="none" stroke="currentColor" stroke-width="7" stroke-linecap="round" stroke-linejoin="miter"/></svg></button>
            </div>

            <div class="mt-9 h-[171px] grid grid-cols-7 grid-rows-2 gap-[2px] p-[2px] rounded-[20px] bg-[#eeeff2] text-[#626a85] fill-current">
                <button class="relative bg-white rounded-tl-[18px] flex items-center justify-center" aria-label="Trill">
                    <svg class="w-20 h-[60px]" viewBox="-40 -30 80 60"><g transform="scale(.15)"><use href="#trill"/></g></svg>
                    <span class="absolute -inset-[2px] rounded-[4px] border-2 border-[#1d58dc] shadow-[0_0_0_1px_#bcd6ff,inset_0_0_0_1px_#e3eeff]"></span>
                </button>
                <button class="bg-white flex items-center justify-center" aria-label="Tremolo 1"><svg class="w-20 h-[60px]" viewBox="-40 -30 80 60"><path d="M2.7 14V-21.5" stroke="currentColor" stroke-width="1.3"/><use href="#cellHead" x="-3.4" y="14.5"/><use href="#slash" x="2" y="-7.5"/></svg></button>
                <button class="bg-white flex items-center justify-center" aria-label="Tremolo 2"><svg class="w-20 h-[60px]" viewBox="-40 -30 80 60"><path d="M4.7 14V-21.5" stroke="currentColor" stroke-width="1.3"/><use href="#cellHead" x="-1.4" y="14.5"/><use href="#slash" x="4" y="-11"/><use href="#slash" x="4" y="-3.5"/></svg></button>
                <button class="bg-white flex items-center justify-center" aria-label="Tremolo 3"><svg class="w-20 h-[60px]" viewBox="-40 -30 80 60"><path d="M2.7 14V-21.5" stroke="currentColor" stroke-width="1.3"/><use href="#cellHead" x="-3.4" y="14.5"/><use href="#slash" x="2" y="-14.5"/><use href="#slash" x="2" y="-7"/><use href="#slash" x="2"/></svg></button>
                <button class="bg-white flex items-center justify-center" aria-label="Tremolo 4"><svg class="w-20 h-[60px]" viewBox="-40 -30 80 60"><path d="M2.7 18V-25.5" stroke="currentColor" stroke-width="1.3"/><use href="#cellHead" x="-3.4" y="18.5"/><use href="#slash" x="2" y="-18"/><use href="#slash" x="2" y="-10.7"/><use href="#slash" x="2" y="-3.4"/><use href="#slash" x="2" y="3.9"/></svg></button>
                <button class="bg-white flex items-center justify-center" aria-label="Two-note tremolo 1"><svg class="w-20 h-[60px]" viewBox="-40 -30 80 60"><use href="#pair"/><path d="M-4 -17H15" stroke="currentColor" stroke-width="6"/></svg></button>
                <button class="bg-white rounded-tr-[18px] flex items-center justify-center" aria-label="Two-note tremolo 2"><svg class="w-20 h-[60px]" viewBox="-40 -30 80 60"><use href="#pair"/><path d="M-4 -17H15M-4 -9.2H15" stroke="currentColor" stroke-width="6"/></svg></button>
                <button class="bg-white rounded-bl-[18px] flex items-center justify-center" aria-label="Two-note tremolo 3"><svg class="w-20 h-[60px]" viewBox="-40 -30 80 60"><use href="#pair"/><path d="M-4 -16.5H15M-4 -8.7H15M-4 -1H15" stroke="currentColor" stroke-width="5.6"/></svg></button>
                <button class="bg-white flex items-center justify-center" aria-label="Two-note tremolo 4"><svg class="w-20 h-[60px]" viewBox="-40 -30 80 60"><use href="#pair" y="2"/><path d="M-4 -18.4H15M-4 -10.6H15M-4 -2.9H15M-4 4.8H15" stroke="currentColor" stroke-width="5.6"/></svg></button>
                <button class="bg-[#f9f9fa] flex items-center justify-center" aria-label="Arpeggio" disabled><svg class="w-20 h-[60px]" viewBox="-40 -30 80 60"><path d="M-2 -16Q3.5 -13 0 -10T-1 -5Q3.5 -2 0 1T-1 6Q3.5 9 0 11T0 16" fill="none" stroke="#d9dae3" stroke-width="4"/></svg></button>
                <button class="bg-white flex items-center justify-center" aria-label="Glissando"><svg class="w-20 h-[60px]" viewBox="-40 -30 80 60"><path d="M-22.5 22C-22 16.5 -18 20.5 -17.5 17.5S-13 16.5 -12.5 13S-8 12.500 -7.500 8.500S-3 8 -2.500 3.500S2 3.500 2.500 -1S7 -1.500 7.500 -5.500S12 -6 12.500 -10S17 -10.500 17.500 -14.500S21.500 -15.500 22 -20.500" fill="none" stroke="currentColor" stroke-width="3.5"/></svg></button>
                <button class="bg-white flex items-center justify-center gap-6 pl-[7px]" aria-label="Mordent">
                    <svg class="w-7 h-5" viewBox="-56 -40 112 80"><use href="#mordent"/><path d="M0 -31V31" stroke="currentColor" stroke-width="5"/></svg>
                    <svg class="w-[26px] h-4" viewBox="0 0 26 16"><path d="M3 3L13 13L23 3" fill="none" stroke="currentColor" stroke-width="5" stroke-linecap="round"/></svg>
                </button>
                <button class="bg-white flex items-center justify-center" aria-label="Turn"><svg class="w-20 h-[60px]" viewBox="-40 -30 80 60"><use href="#turn" transform="translate(0 1) scale(.49)"/></svg></button>
                <button class="bg-white rounded-br-[18px] flex items-center justify-center" aria-label="Inverted turn"><svg class="w-20 h-[60px]" viewBox="-40 -30 80 60"><use href="#turn" transform="translate(0 -1) scale(.49)"/><path d="M0 -16V14" stroke="currentColor" stroke-width="2"/></svg></button>
            </div>
        </div>
    </section>

    <h2 class="mt-[14px] ml-[2px] w-fit h-10 pl-[11px] pr-3 rounded-lg bg-[#1565f0] text-white font-['Lato',sans-serif] font-bold text-[20px] leading-[37px] whitespace-pre">trill, mordent, inverted mordent and turn</h2>

    <!-- Notated example -->
    <section class="mt-[3px] bg-white border border-[#dfe3ec] rounded-md pb-px">
        <svg class="block mx-auto w-[698px] max-w-full h-auto text-black" viewBox="121 935 698 336" fill="currentColor">
            <rect x="121.5" y="935.5" width="697" height="335" fill="none" stroke="#f8e6f8"/>
            <path d="M121 1044.3H819M121 1083.5H819M121 1122.7H819M121 1161.8H819M121 1201H819" stroke="currentColor" stroke-width="5"/>
            <path d="M796 1043V1202" stroke="currentColor" stroke-width="6"/>
            <use href="#bigHead" x="185.8" y="1083.5"/><use href="#bigHead" x="343.3" y="1103"/><use href="#bigHead" x="501.5" y="1122.5"/><use href="#bigHead" x="658.3" y="1141.8"/>
            <path d="M164.5 1090V1220.5M322.3 1110V1240.5M480 1129V1260M679.2 1005V1135" stroke="currentColor" stroke-width="4.6"/>
            <g transform="translate(185 976) scale(.3333)"><use href="#trill"/></g>
            <use href="#mordent" x="343" y="986"/><path d="M342.5 955V1017" stroke="currentColor" stroke-width="5"/>
            <use href="#mordent" x="500.5" y="986"/>
            <use href="#turn" x="658.5" y="968.5"/>
        </svg>
    </section>
</body>
</html>
